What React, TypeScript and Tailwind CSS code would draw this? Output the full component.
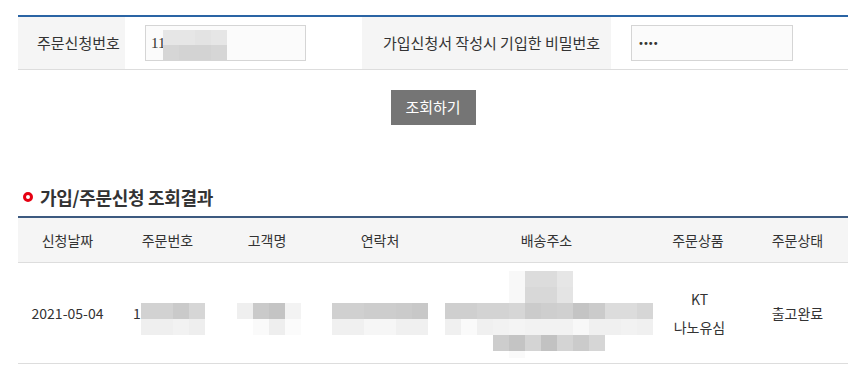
import React from 'react';

type Cell = string | null;

// pixelated blur blocks used to hide personal data
function Mosaic({ rows, cell = 16 }: { rows: { h?: number; cells: Cell[] }[]; cell?: number }) {
  return (
    <div className="flex flex-col">
      {rows.map((r, i) => (
        <div key={i} className="flex">
          {r.cells.map((c, j) => (
            <div key={j} style={{ width: cell, height: r.h ?? cell, background: c ?? 'transparent' }} />
          ))}
        </div>
      ))}
    </div>
  );
}

const headers = [
  { title: '신청날짜', w: 'w-[99px]' },
  { title: '주문번호', w: 'w-[101px]' },
  { title: '고객명', w: 'w-[98px]' },
  { title: '연락처', w: 'w-[128px]' },
  { title: '배송주소', w: 'w-[205px]' },
  { title: '주문상품', w: 'w-[98px]' },
  { title: '주문상태', w: 'w-[101px]' },
];

const addressRows = [
  { cells: [null, null, null, null, '#f8f8f8', '#dcdcdc', '#dcdcdc', '#e6e6e6', null, null, null, null, null] },
  { cells: [null, null, null, null, '#f8f8f8', '#d8d8d8', '#d8d8d8', '#e4e4e4', null, null, null, null, null] },
  {
    cells: ['#cfcfcf', '#cfcfcf', '#d3d3d3', '#d3d3d3', '#d6d6d6', '#cbcbcb', '#cecece', '#d0d0d0', '#c4c4c4', '#cbcbcb', '#dcdcdc', '#dcdcdc', '#d6d6d6'],
  },
  {
    cells: ['#f0f0f0', '#fafafa', '#f0f0f0', '#f2f2f2', '#f4f4f4', '#f2f2f2', '#f2f2f2', '#f2f2f2', '#f8f8f8', '#f0f0f0', '#f0f0f0', '#f2f2f2', '#f0f0f0'],
  },
  { cells: [null, null, null, '#cdcdcd', '#c4c4c4', '#d4d4d4', '#c2c2c2', '#d4d4d4', '#cbcbcb', '#d6d6d6', null, null, null] },
  { h: 7, cells: [null, null, null, null, '#fafafa', null, null, null, null, null, null, null, null] },
];

export default function App() {
  return (
    <div
      className="w-[859px] h-[381px] bg-white pt-[15px] pl-[18px] pr-[11px] text-[#333]"
      style={{ fontFamily: '"Noto Sans CJK KR", "Noto Sans", sans-serif' }}
    >
      {/* Search form */}
      <div className="flex h-[55px] border-t-2 border-b border-t-[#2a64a4] border-b-[#dddddd]">
        <div className="w-[107px] bg-[#f5f5f5] flex items-center pl-[19px] text-[15px]">주문신청번호</div>
        <div className="w-[237px] flex items-center pl-[20px]">
          <div className="w-[161px] h-[36px] border border-[#d5d5d5] bg-[#fbfbfb] flex items-center pl-[5px]">
            <span className="text-[15px] text-[#333] leading-none" style={{ fontFamily: '"Liberation Serif", serif' }}>
              11
            </span>
            <div className="-ml-[2px] mt-[3px]">
              <Mosaic
                rows={[
                  { h: 15, cells: ['#e6e6e6', '#e6e6e6', '#e3e3e3', '#e6e6e6'] },
                  { h: 15, cells: ['#d6d6d6', '#d3d3d3', '#d3d3d3', '#d6d6d6'] },
                ]}
              />
            </div>
          </div>
        </div>
        <div className="w-[249px] bg-[#f5f5f5] flex items-center pl-[21px] text-[15px]">가입신청서 작성시 기입한 비밀번호</div>
        <div className="flex items-center pl-[20px]">
          <div className="w-[162px] h-[36px] border border-[#d5d5d5] bg-[#fbfbfb] flex items-center pl-[6px]">
            <span className="text-[10px] tracking-[-1px] text-[#333]" style={{ fontFamily: '"DejaVu Sans", sans-serif' }}>
              ••••
            </span>
          </div>
        </div>
      </div>

      <div className="flex justify-center mt-[20px]">
        <button className="w-[85px] h-[35px] bg-[#757575] text-white text-[15px] flex items-center justify-center">
          조회하기
        </button>
      </div>

      {/* Result heading */}
      <div className="mt-[59px] h-[26px] flex items-center gap-[7px] pl-[5px]">
        <span className="w-[10px] h-[10px] rounded-full border-[3px] border-[#e60012]" />
        <h2 className="text-[18px] font-bold text-[#333] tracking-[-0.3px]">가입/주문신청 조회결과</h2>
      </div>

      {/* Result table */}
      <div className="mt-[6px] border-t-2 border-[#3d5a80]">
        <div className="flex h-[45px] bg-[#f5f5f5] border-b border-[#dddddd] text-[14px]">
          {headers.map((h) => (
            <div key={h.title} className={`${h.w} flex items-center justify-center`}>
              {h.title}
            </div>
          ))}
        </div>
        <div className="flex h-[101px] border-b border-[#dddddd] text-[14px]">
          <div className="w-[99px] flex items-center justify-center">2021-05-04</div>
          <div className="w-[101px] flex items-center justify-center pl-[3px]">
            <span>1</span>
            <div className="mt-[12px]">
              <Mosaic
                rows={[
                  { cells: ['#d2d2d2', '#d2d2d2', '#cacaca', '#d6d6d6'] },
                  { cells: ['#efefef', '#efefef', '#f2f2f2', '#eeeeee'] },
                ]}
              />
            </div>
          </div>
          <div className="w-[98px] flex items-center justify-center pl-[4px] pt-[12px]">
            <Mosaic
              rows={[
                { cells: ['#efefef', '#cacaca', '#c4c4c4', '#f3f3f3'] },
                { cells: [null, '#fafafa', '#eeeeee', '#fbfbfb'] },
              ]}
            />
          </div>
          <div className="w-[128px] flex items-center justify-center pt-[12px]">
            <Mosaic
              rows={[
                { cells: ['#d0d0d0', '#d0d0d0', '#cdcdcd', '#cdcdcd', '#cbcbcb', '#c8c8c8'] },
                { cells: ['#f0f0f0', '#f0f0f0', '#f6f6f6', '#f6f6f6', '#f0f0f0', '#f0f0f0'] },
              ]}
            />
          </div>
          <div className="w-[205px] flex items-center justify-center pl-[4px] pt-[3px]">
            <Mosaic rows={addressRows} />
          </div>
          <div className="w-[98px] flex flex-col items-center justify-center leading-[28px] pl-[3px]">
            <span>KT</span>
            <span>나노유심</span>
          </div>
          <div className="w-[101px] flex items-center justify-center">출고완료</div>
        </div>
      </div>
    </div>
  );
}
